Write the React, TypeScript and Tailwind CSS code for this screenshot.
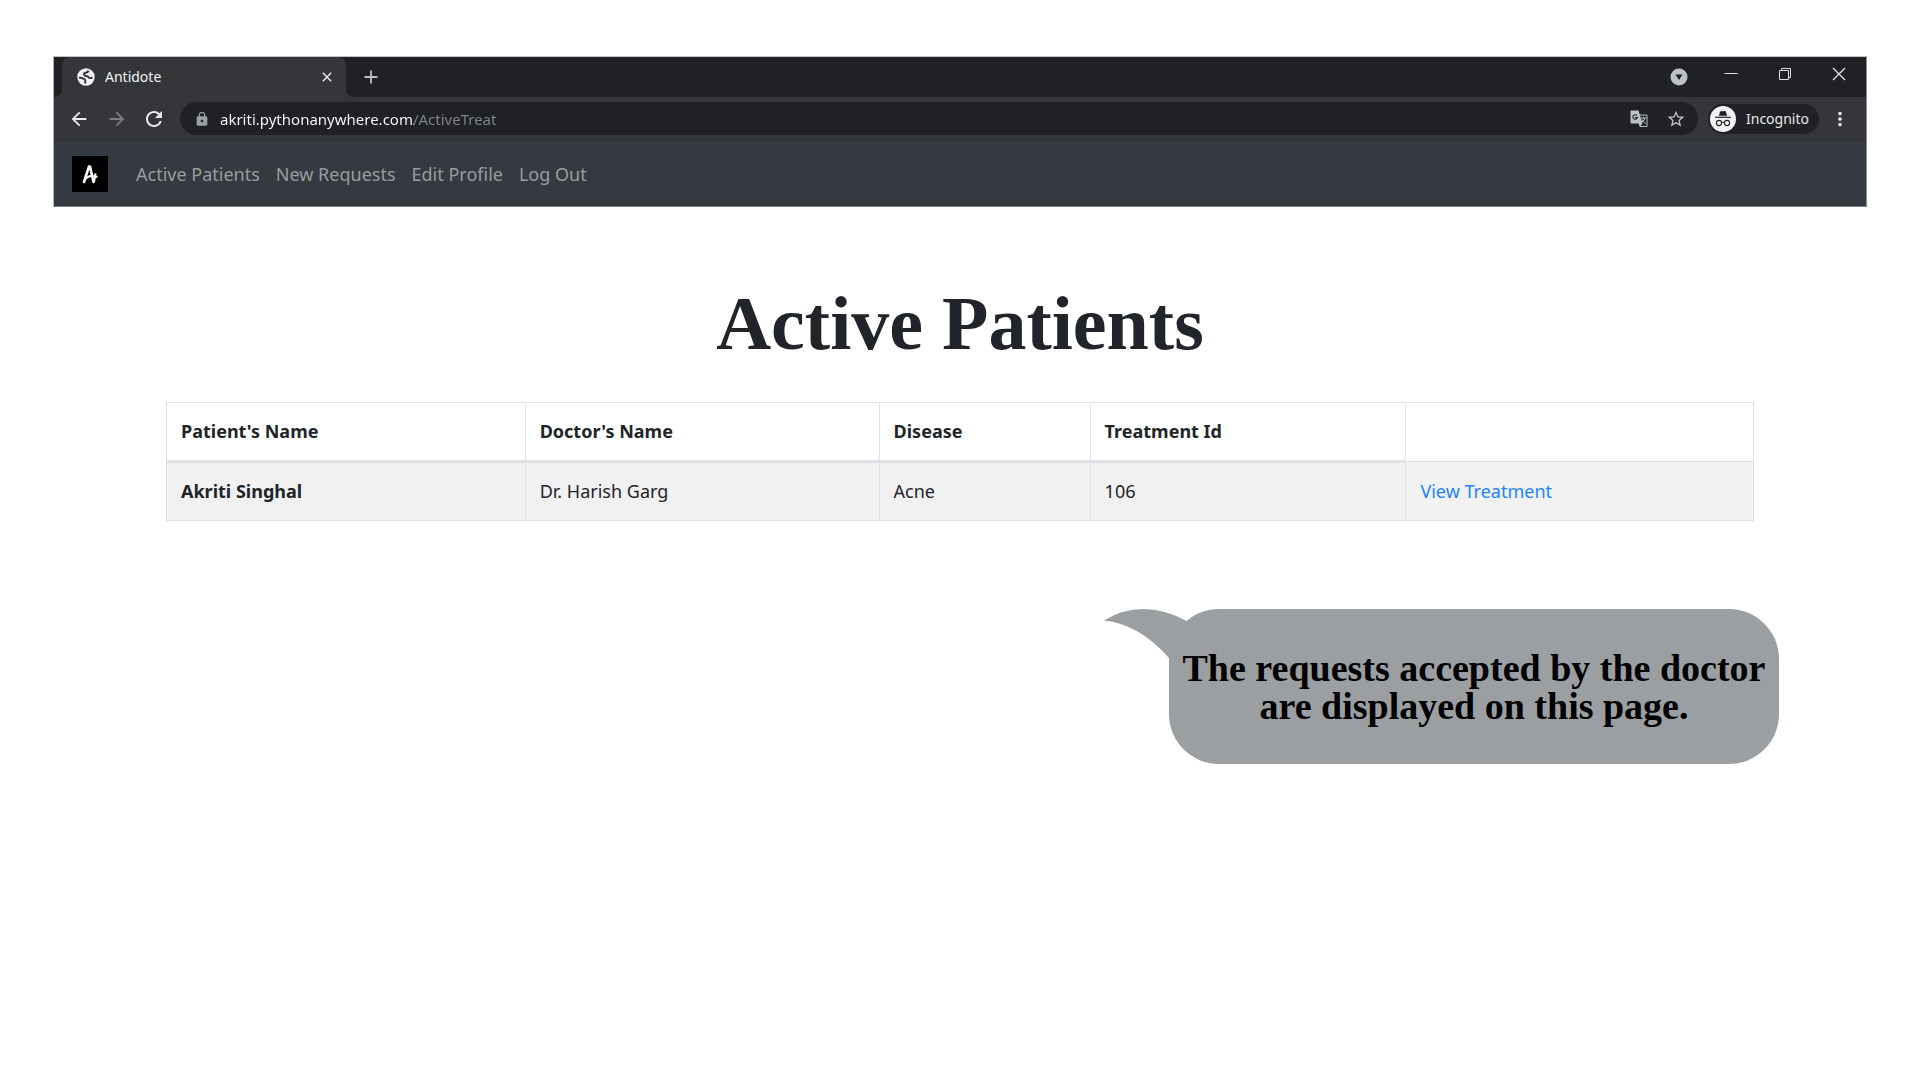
import React from "react";
import { MdLock, MdStarBorder, MdRefresh, MdArrowBack, MdArrowForward, MdMoreVert, MdClose, MdAdd } from "react-icons/md";

const navLinks = ["Active Patients", "New Requests", "Edit Profile", "Log Out"];

const patients = [
  { name: "Akriti Singhal", doctor: "Dr. Harish Garg", disease: "Acne", id: "106" },
];

function GlobeIcon() {
  return (
    <svg viewBox="0 0 18 18" className="size-[18px]" aria-hidden="true">
      <circle cx="9" cy="9" r="8.7" fill="#f1f3f4" />
      <path
        d="M11.500 2.500Q11 4.500 8.800 4.700 6.600 5 7 6.600 7.400 7.800 9.500 7.900 11.200 8 11.600 9.500 12.200 10.600 15.500 9.800M2 9.500 5.500 10.200Q8 10.800 8.300 12.500 8.600 13.500 8 15.500"
        fill="none"
        stroke="#35363a"
        strokeWidth="2"
      />
    </svg>
  );
}

function TranslateIcon() {
  return (
    <svg viewBox="0 0 18 18" className="size-[18px]" aria-hidden="true">
      <path d="M1.500.5h7l1.200 4h6.800q1 0 1 1v10.500q0 1-1 1H9.800L8.600 13.500H1.500q-1 0-1-1v-11q0-1 1-1z" fill="#bdc1c6" />
      <path d="M10 5.500h6.500V16h-6l2-2.500z" fill="#202124" />
      <path d="M7 5.600a2.300 2.300 0 1 0 .4 2H5.200" fill="none" stroke="#202124" strokeWidth="1.100" />
      <path d="M11 8h5M13.500 6.800V8M15 8q-.8 3-3.500 4.500M12 9.500q1.200 2.500 3.600 4" fill="none" stroke="#bdc1c6" />
    </svg>
  );
}

function IncognitoIcon() {
  return (
    <svg viewBox="0 0 26 26" className="size-[26px]" aria-hidden="true">
      <circle cx="13" cy="13" r="13" fill="#f1f3f4" />
      <path d="M8.800 9.800 10.200 5.600q.3-.9 1.200-.6l1.600.4 1.600-.4q.9-.3 1.200.6l1.400 4.200z" fill="#202124" />
      <path d="M5.200 11.300h15.600" stroke="#202124" strokeWidth="1.200" />
      <g fill="none" stroke="#202124" strokeWidth="1.100">
        <circle cx="9" cy="17" r="2.600" />
        <circle cx="17" cy="17" r="2.600" />
        <path d="M11.600 16.600q1.400-.8 2.800 0" />
      </g>
    </svg>
  );
}

function TabStrip() {
  return (
    <div className="flex h-10 items-stretch bg-[#202124] pl-2">
      <div className="relative flex w-[284px] items-center rounded-t-lg bg-[#35363a] pl-[15px] pr-[11px] text-[#f1f3f4]">
        <svg viewBox="0 0 8 8" className="absolute -left-2 bottom-0 size-2" aria-hidden="true">
          <path d="M8 0v8H0a8 8 0 0 0 8-8z" fill="#35363a" />
        </svg>
        <svg viewBox="0 0 8 8" className="absolute -right-2 bottom-0 size-2" aria-hidden="true">
          <path d="M0 0v8h8a8 8 0 0 1-8-8z" fill="#35363a" />
        </svg>
        <GlobeIcon />
        <span className="ml-2.5 flex-1 text-sm">Antidote</span>
        <button aria-label="Close tab">
          <MdClose className="size-4" stroke="currentColor" />
        </button>
      </div>
      <button aria-label="New tab" className="ml-3.5 text-[#bdc1c6]">
        <MdAdd className="size-[22px]" />
      </button>
      <div className="ml-auto flex items-center text-[#dadce0]">
        <button aria-label="Search tabs" className="mr-9">
          <svg viewBox="0 0 18 18" className="size-[18px]" aria-hidden="true">
            <circle cx="9" cy="9" r="8.5" fill="#bdc1c6" />
            <path d="M5.5 6.5h7L9 12z" fill="#202124" />
          </svg>
        </button>
        <button aria-label="Minimize" className="mr-10 pb-1.5">
          <svg viewBox="0 0 14 14" className="size-3.5" aria-hidden="true">
            <path d="M0.5 6.5h13" stroke="#dadce0" />
          </svg>
        </button>
        <button aria-label="Restore" className="mr-10 pb-1.5">
          <svg viewBox="0 0 14 14" className="size-3.5" fill="none" stroke="#dadce0" aria-hidden="true">
            <path d="M1.5 3.5h9v9h-9zM3.5 3.5v-2h9v9h-2" />
          </svg>
        </button>
        <button aria-label="Close window" className="mr-5 pb-1.5">
          <svg viewBox="0 0 14 14" className="size-3.5" stroke="#e8eaed" strokeWidth="1.2" aria-hidden="true">
            <path d="M1 1l12 12M13 1L1 13" />
          </svg>
        </button>
      </div>
    </div>
  );
}

function Toolbar() {
  return (
    <div className="flex h-11 items-center border-b border-[#2c2d30] bg-[#35363a] pl-3.5 pr-[15px] text-[#e8eaed]">
      <button aria-label="Back">
        <MdArrowBack className="size-[22px]" />
      </button>
      <button aria-label="Forward" className="ml-4 text-[#7d7f83]">
        <MdArrowForward className="size-[22px]" />
      </button>
      <button aria-label="Reload" className="ml-3.5">
        <MdRefresh className="size-6" />
      </button>
      <div className="ml-3.5 flex h-[33px] flex-1 items-center rounded-full bg-[#202124] px-3 text-[#bdc1c6]">
        <MdLock className="ml-0.5 size-4 text-[#9aa0a6]" />
        <input
          aria-label="Address"
          defaultValue="akriti.pythonanywhere.com/ActiveTreat"
          className="ml-2.5 h-full flex-1 bg-[linear-gradient(90deg,#ffffff_194px,#80868b_194px)] bg-clip-text text-[15px] text-transparent outline-none"
        />
        <button aria-label="Translate this page">
          <TranslateIcon />
        </button>
        <button aria-label="Bookmark this tab" className="ml-[18px]">
          <MdStarBorder className="size-5" />
        </button>
      </div>
      <button className="ml-2.5 flex h-[30px] items-center rounded-full bg-[#202124] pl-0.5 pr-2.5 text-sm text-[#e8eaed]">
        <IncognitoIcon />
        <span className="ml-2.5">Incognito</span>
      </button>
      <button aria-label="Menu" className="ml-2.5">
        <MdMoreVert className="size-[22px]" />
      </button>
    </div>
  );
}

function SiteNav() {
  return (
    <nav className="flex h-[65px] items-center bg-[#343a40] pl-[18px] text-lg text-[#999c9f]">
      <a href="#" aria-label="Antidote home" className="mr-5">
        <svg viewBox="0 0 36 36" className="size-9" aria-hidden="true">
          <path d="M0 0h36v36H0z" fill="#000" />
          <path d="M12 26 17 10.5 18 10.500 21.500 26" fill="none" stroke="#fff" strokeWidth="2.600" strokeLinecap="round" strokeLinejoin="round" />
          <path d="M13.500 22.500q4-3 7-2.500l5 1M23.500 17.500l-1.500 8" fill="none" stroke="#fff" strokeWidth="2.200" />
        </svg>
      </a>
      {navLinks.map((label) => (
        <a key={label} href="#" className="px-2">
          {label}
        </a>
      ))}
    </nav>
  );
}

function PatientsTable() {
  const cell = "border border-[#dee2e6] px-3.5 py-4 text-left";
  return (
    <table className="mt-[39px] w-full table-fixed border-collapse text-lg leading-[25px] text-[#212529]">
      <colgroup>
        <col className="w-[22.6%]" />
        <col className="w-[22.3%]" />
        <col className="w-[13.3%]" />
        <col className="w-[19.9%]" />
        <col className="w-[21.9%]" />
      </colgroup>
      <thead>
        <tr>
          {["Patient's Name", "Doctor's Name", "Disease", "Treatment Id"].map((h) => (
            <th key={h} scope="col" className="border border-b-3 border-[#dee2e6] px-3.5 py-4 text-left font-bold">
              {h}
            </th>
          ))}
          <td className={cell}></td>
        </tr>
      </thead>
      <tbody>
        {patients.map((p) => (
          <tr key={p.id} className="bg-[#f1f1f1]">
            <th scope="row" className={cell + " font-bold"}>{p.name}</th>
            <td className={cell}>{p.doctor}</td>
            <td className={cell}>{p.disease}</td>
            <td className={cell}>{p.id}</td>
            <td className={cell}>
              <a href="#" className="text-[#2185fb]">View Treatment</a>
            </td>
          </tr>
        ))}
      </tbody>
    </table>
  );
}

function SpeechBubble() {
  return (
    <aside className="relative mr-[88px] mt-[88px] ml-auto flex h-[155px] w-[610px] items-center justify-center rounded-[50px] bg-[#9b9fa1] text-center font-['Liberation_Serif',serif] text-[38px] leading-[38px] font-bold text-black">
      <svg viewBox="0 0 100 60" className="absolute top-0 -left-[65px] h-[60px] w-[100px]" aria-hidden="true">
        <path d="M0 11.500Q18 0 39 0Q61 0 82.500 12L82 60L65 49Q35 15 0 11.500z" fill="#9b9fa1" />
      </svg>
      <p className="relative">
        The requests accepted by the doctor
        <br />
        are displayed on this page.
      </p>
    </aside>
  );
}

export default function App() {
  return (
    <div className="min-h-screen bg-white px-[53px] pt-14 font-['Noto_Sans',sans-serif]">
      <header className="border border-t-[#c4c5c7] border-r-[#8b8d90] border-b-[#7d8083] border-l-[#b4b5b7]">
        <TabStrip />
        <Toolbar />
        <SiteNav />
      </header>
      <main>
        <div className="px-[113px] pt-[76px]">
          <h1 className="text-center font-['Liberation_Serif',serif] text-[76px] leading-20 font-bold text-[#212529]">
            Active Patients
          </h1>
          <PatientsTable />
        </div>
        <SpeechBubble />
      </main>
    </div>
  );
}
